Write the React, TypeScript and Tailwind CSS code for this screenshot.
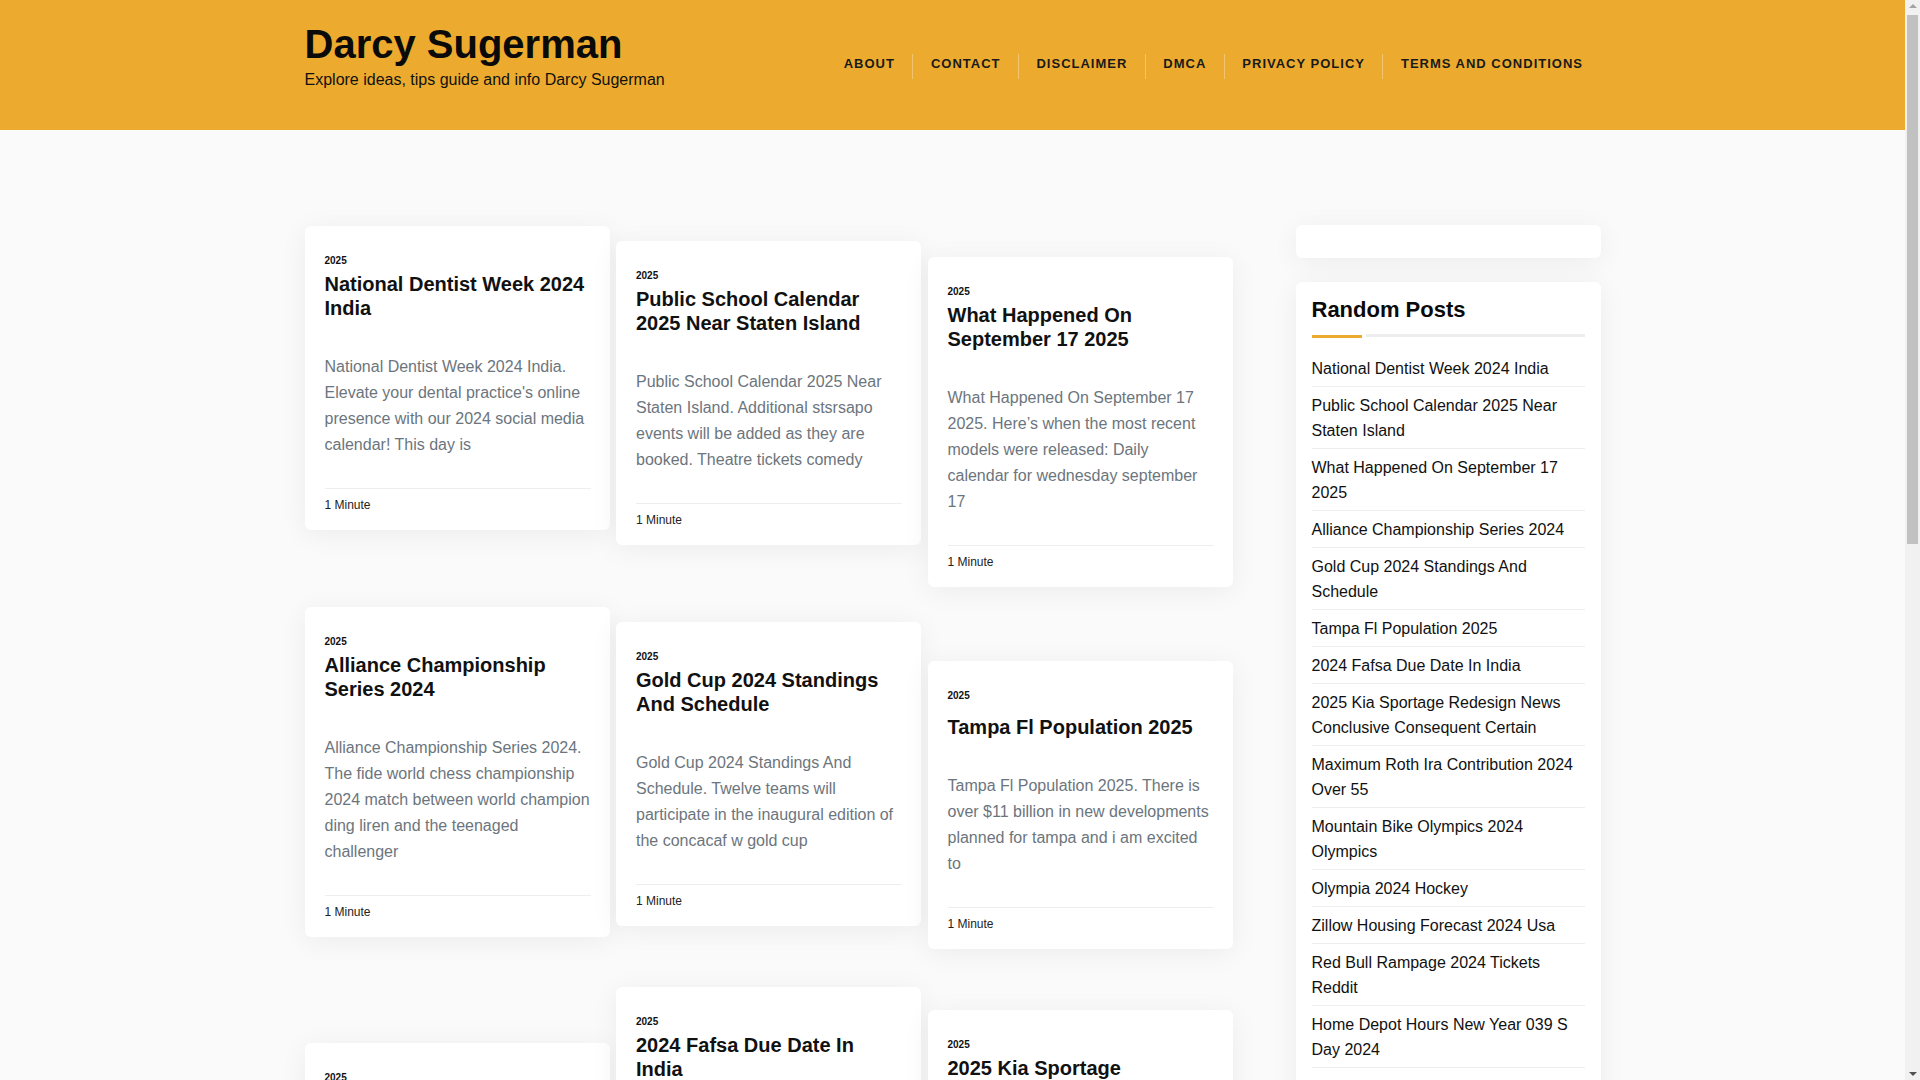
import React from 'react';

type Post = {
  title: string;
  excerpt: string;
  single?: boolean;
  gap: string;
};

const COLUMNS: Post[][] = [
  [
    {
      title: 'National Dentist Week 2024 India',
      excerpt:
        "National Dentist Week 2024 India. Elevate your dental practice's online presence with our 2024 social media calendar! This day is",
      gap: 'mt-px',
    },
    {
      title: 'Alliance Championship Series 2024',
      excerpt:
        'Alliance Championship Series 2024. The fide world chess championship 2024 match between world champion ding liren and the teenaged challenger',
      gap: 'mt-[77px]',
    },
    {
      title: 'Maximum Roth Ira Contribution 2024 Over 55',
      excerpt:
        'Maximum Roth Ira Contribution 2024 Over 55. The annual limit on contributions rises again this year for savers',
      gap: 'mt-[106px]',
    },
  ],
  [
    {
      title: 'Public School Calendar 2025 Near Staten Island',
      excerpt:
        'Public School Calendar 2025 Near Staten Island. Additional stsrsapo events will be added as they are booked. Theatre tickets comedy',
      gap: 'mt-4',
    },
    {
      title: 'Gold Cup 2024 Standings And Schedule',
      excerpt:
        'Gold Cup 2024 Standings And Schedule. Twelve teams will participate in the inaugural edition of the concacaf w gold cup',
      gap: 'mt-[77px]',
    },
    {
      title: '2024 Fafsa Due Date In India',
      excerpt:
        '2024 Fafsa Due Date In India. The new application opens later than usual and students should plan ahead',
      gap: 'mt-[61px]',
    },
  ],
  [
    {
      title: 'What Happened On September 17 2025',
      excerpt:
        'What Happened On September 17 2025. Here’s when the most recent models were released: Daily calendar for wednesday september 17',
      gap: 'mt-8',
    },
    {
      title: 'Tampa Fl Population 2025',
      excerpt:
        'Tampa Fl Population 2025. There is over $11 billion in new developments planned for tampa and i am excited to',
      single: true,
      gap: 'mt-[74px]',
    },
    {
      title: '2025 Kia Sportage Redesign News Conclusive Consequent Certain',
      excerpt:
        '2025 Kia Sportage Redesign News Conclusive Consequent Certain. The refreshed compact suv arrives with a bolder face',
      gap: 'mt-[61px]',
    },
  ],
];

const RANDOM_POSTS = [
  'National Dentist Week 2024 India',
  'Public School Calendar 2025 Near Staten Island',
  'What Happened On September 17 2025',
  'Alliance Championship Series 2024',
  'Gold Cup 2024 Standings And Schedule',
  'Tampa Fl Population 2025',
  '2024 Fafsa Due Date In India',
  '2025 Kia Sportage Redesign News Conclusive Consequent Certain',
  'Maximum Roth Ira Contribution 2024 Over 55',
  'Mountain Bike Olympics 2024 Olympics',
  'Olympia 2024 Hockey',
  'Zillow Housing Forecast 2024 Usa',
  'Red Bull Rampage 2024 Tickets Reddit',
  'Home Depot Hours New Year 039 S Day 2024',
  'Best New Release 2024 Hbo',
];

const NAV = ['About', 'Contact', 'Disclaimer', 'DMCA', 'Privacy Policy', 'Terms and Conditions'];

const PostCard: React.FC<{ post: Post }> = ({ post }) => (
  <article
    className={`${post.gap} bg-white rounded-md shadow-[0_4px_28px_rgba(0,0,0,0.06)] pl-[20px] pr-[19px] pt-[27px] pb-4`}
  >
    <div className="text-[10px] leading-[15px] font-bold text-[#111]">2025</div>
    <h2 className={`${post.single ? 'mt-3' : 'mt-1'} text-[20px] leading-[24px] font-bold text-[#111]`}>
      {post.title}
    </h2>
    <p className="mt-[34px] text-[16px] leading-[26px] text-[#6c757d]">{post.excerpt}</p>
    <div className="mt-[30px] border-t border-[#eeeeee] pt-[7px] text-[12px] leading-[18px] text-[#222]">
      1 Minute
    </div>
  </article>
);

// the page in the reference shows a classic browser scrollbar
const Scrollbar = () => (
  <div className="fixed top-0 right-0 h-screen w-[15px] bg-[#f1f1f1]">
    <div className="absolute top-[4px] left-[4px] h-0 w-0 border-x-[4px] border-b-[4px] border-x-transparent border-b-[#a3a3a3]" />
    <div className="absolute top-[15px] left-[2px] h-[529px] w-[11px] bg-[#c1c1c1]" />
    <div className="absolute bottom-[4px] left-[4px] h-0 w-0 border-x-[4px] border-t-[4px] border-x-transparent border-t-[#505050]" />
  </div>
);

export default function App() {
  return (
    <div className="min-h-screen bg-[#fafafa] pr-[15px] font-['Liberation_Sans',Arial,sans-serif]">
      {/* site header */}
      <header className="h-[130px] bg-[#ecab2e]">
        <div className="mx-auto flex max-w-[1296px] items-start justify-between">
          <div className="pt-[20px]">
            <h1 className="text-[40px] leading-[48px] font-bold text-[#0a0a0a]">Darcy Sugerman</h1>
            <p className="text-[16px] leading-[24px] text-[#111]">
              Explore ideas, tips guide and info Darcy Sugerman
            </p>
          </div>
          <nav className="mt-[54px]">
            <ul className="flex">
              {NAV.map((item, i) => (
                <li
                  key={item}
                  className={`h-[25px] px-[17.5px] text-[13px] leading-[20px] font-bold uppercase tracking-[1px] text-[#1a1a1a] ${
                    i === 0 ? '' : 'border-l border-white/30'
                  }`}
                >
                  {item}
                </li>
              ))}
            </ul>
          </nav>
        </div>
      </header>

      {/* content */}
      <main className="mx-auto flex max-w-[1296px] justify-between pt-[95px] pb-16">
        <div className="grid grid-cols-[305px_305px_305px] items-start gap-x-[6.5px]">
          {COLUMNS.map((col, ci) => (
            <div key={ci} className="flex flex-col">
              {col.map((post) => (
                <PostCard key={post.title} post={post} />
              ))}
            </div>
          ))}
        </div>

        <aside className="w-[305px]">
          <div className="h-[33px] rounded-md bg-white shadow-[0_4px_28px_rgba(0,0,0,0.06)]" />
          <div className="mt-6 rounded-md bg-white px-4 pt-[15px] pb-4 shadow-[0_4px_28px_rgba(0,0,0,0.06)]">
            <h3 className="text-[22px] leading-[26px] font-bold text-[#0a0a0a]">Random Posts</h3>
            <div className="mt-[11px] flex items-start gap-1">
              <div className="mt-px h-[3px] w-[50px] bg-[#ecab2e]" />
              <div className="h-[3px] flex-1 bg-[#eeeeee]" />
            </div>
            <ul className="mt-3">
              {RANDOM_POSTS.map((p) => (
                <li
                  key={p}
                  className="border-b border-[#eeeeee] pt-[6px] pb-[5px] text-[16px] leading-[25px] text-[#111]"
                >
                  {p}
                </li>
              ))}
            </ul>
          </div>
        </aside>
      </main>

      <Scrollbar />
    </div>
  );
}
